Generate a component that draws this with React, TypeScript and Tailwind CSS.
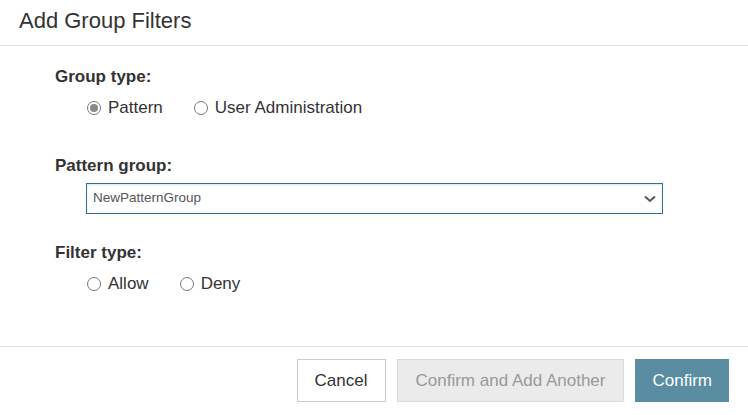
import { useState } from "react";

type Option = { value: string; label: string };

const GROUP_TYPES: Option[] = [
  { value: "pattern", label: "Pattern" },
  { value: "user", label: "User Administration" },
];

const FILTER_TYPES: Option[] = [
  { value: "allow", label: "Allow" },
  { value: "deny", label: "Deny" },
];

function RadioRow({
  options,
  value,
  onChange,
  className,
}: {
  options: Option[];
  value: string | null;
  onChange: (v: string) => void;
  className?: string;
}) {
  return (
    <div className={"flex gap-[31px] pl-[32px] " + (className ?? "")}>
      {options.map((o) => (
        <label
          key={o.value}
          className="flex items-center gap-[7px] text-[17px] leading-[20px] text-[#333] cursor-pointer"
          onClick={() => onChange(o.value)}
        >
          <span className="flex h-[14px] w-[14px] items-center justify-center rounded-full border border-[#777] bg-white">
            {value === o.value && (
              <span className="h-[8px] w-[8px] rounded-full bg-[#888]" />
            )}
          </span>
          {o.label}
        </label>
      ))}
    </div>
  );
}

export default function App() {
  const [groupType, setGroupType] = useState<string | null>("pattern");
  const [filterType, setFilterType] = useState<string | null>(null);

  return (
    <div className="flex h-[415px] w-[748px] flex-col bg-white font-['Liberation_Sans',Arial,sans-serif] text-[#333]">
      <div className="h-[46px] border-b border-[#e5e5e5] px-[19px] pt-[7px]">
        <h1 className="text-[22px] leading-[28px] text-[#333]">Add Group Filters</h1>
      </div>

      <div className="flex-1 px-[55px] pt-[21px]">
        <div className="text-[17px] font-bold leading-[20px]">Group type:</div>
        <RadioRow
          className="mt-[11px]"
          options={GROUP_TYPES}
          value={groupType}
          onChange={setGroupType}
        />

        <div className="mt-[38px] text-[17px] font-bold leading-[20px]">Pattern group:</div>
        <div className="ml-[31px] mt-[7px] flex h-[31px] w-[577px] items-center justify-between border border-[#2a7193] pl-[6px] pr-[6px] shadow-[inset_0_1px_2px_rgba(0,0,0,0.12)]">
          <span className="text-[13.5px] text-[#555]">NewPatternGroup</span>
          <svg width="12" height="8" viewBox="0 0 12 8" className="mt-[1px]">
            <path d="M1 1.5l5 4.5 5-4.5" fill="none" stroke="#555" strokeWidth="2" />
          </svg>
        </div>

        <div className="mt-[29px] text-[17px] font-bold leading-[20px]">Filter type:</div>
        <RadioRow
          className="mt-[11px]"
          options={FILTER_TYPES}
          value={filterType}
          onChange={setFilterType}
        />
      </div>

      <div className="flex justify-end gap-[11px] border-t border-[#e5e5e5] pb-[13px] pr-[19px] pt-[12px]">
        <button className="h-[43px] border border-[#ccc] bg-white px-[17px] text-[17px] text-[#333]">
          Cancel
        </button>
        <button
          disabled
          className="h-[43px] border border-[#d9d9d9] bg-[#ebebeb] px-[18px] text-[17px] text-[#999]"
        >
          Confirm and Add Another
        </button>
        <button className="h-[43px] border border-[#5a8da2] bg-[#5a8da2] px-4 text-[17px] text-white">
          Confirm
        </button>
      </div>
    </div>
  );
}
